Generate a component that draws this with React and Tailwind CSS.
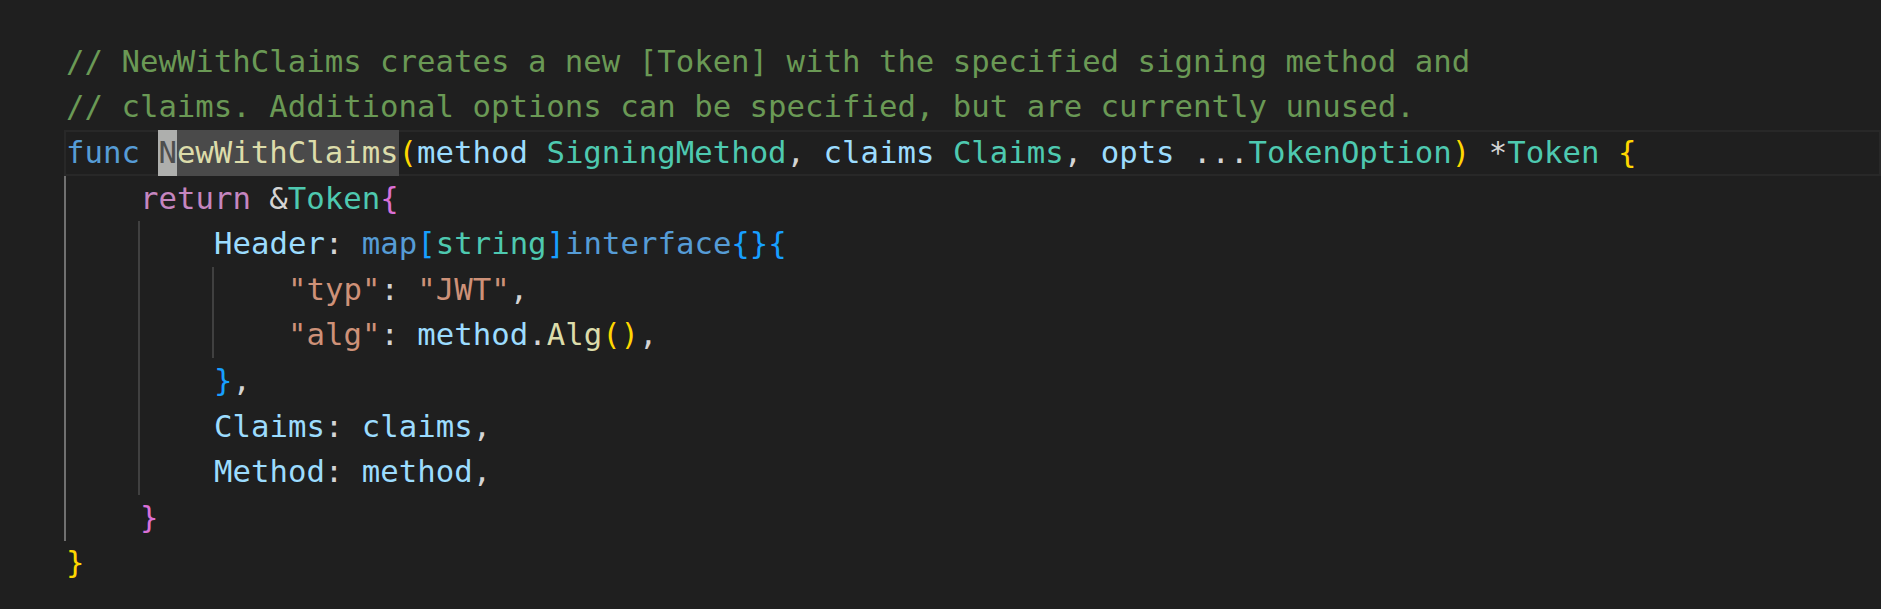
const C = {
  cm: 'text-[#6a9955]',
  kw: 'text-[#569cd6]',
  fn: 'text-[#dcdcaa]',
  pr: 'text-[#9cdcfe]',
  ty: 'text-[#4ec9b0]',
  op: 'text-[#d4d4d4]',
  st: 'text-[#ce9178]',
  ctl: 'text-[#c586c0]',
  b1: 'text-[#ffd700]',
  b2: 'text-[#da70d6]',
  b3: 'text-[#179fff]',
};

// each line: indent level + tokens [class, text]
const LINES = [
  { indent: 0, toks: [[C.cm, '// NewWithClaims creates a new [Token] with the specified signing method and']] },
  { indent: 0, toks: [[C.cm, '// claims. Additional options can be specified, but are currently unused.']] },
  { indent: 0, current: true },
  { indent: 1, toks: [[C.ctl, 'return'], [C.op, ' &'], [C.ty, 'Token'], [C.b2, '{']] },
  { indent: 2, toks: [[C.pr, 'Header'], [C.op, ': '], [C.kw, 'map'], [C.b3, '['], [C.ty, 'string'], [C.b3, ']'], [C.kw, 'interface'], [C.b3, '{}{']] },
  { indent: 3, toks: [[C.st, '"typ"'], [C.op, ': '], [C.st, '"JWT"'], [C.op, ',']] },
  { indent: 3, toks: [[C.st, '"alg"'], [C.op, ': '], [C.pr, 'method'], [C.op, '.'], [C.fn, 'Alg'], [C.b1, '()'], [C.op, ',']] },
  { indent: 2, toks: [[C.b3, '}'], [C.op, ',']] },
  { indent: 2, toks: [[C.pr, 'Claims'], [C.op, ': '], [C.pr, 'claims'], [C.op, ',']] },
  { indent: 2, toks: [[C.pr, 'Method'], [C.op, ': '], [C.pr, 'method'], [C.op, ',']] },
  { indent: 1, toks: [[C.b2, '}']] },
  { indent: 0, toks: [[C.b1, '}']] },
];

function Guides({ n }) {
  return Array.from({ length: n }).map((_, i) => (
    <span
      key={i}
      className={`inline-block h-full w-[74px] shrink-0 border-l-2 ${i === 0 ? 'border-[#707070]' : 'border-[#404040]'}`}
    />
  ));
}

function FuncLine() {
  return (
    <div className="flex h-[45.6px] items-center border-2 border-[#282828] whitespace-pre">
      <span className={C.kw}>func </span>
      <span className="flex h-[45.6px] shrink-0 items-center bg-[#4a4a4a]">
        <span className="flex h-full items-center bg-[#aeafad] text-[#4e4e4e]">N</span>
        <span className={C.fn}>ewWithClaims</span>
      </span>
      <span className={C.b1}>(</span>
      <span className={C.pr}>method</span>
      <span className={C.ty}> SigningMethod</span>
      <span className={C.op}>, </span>
      <span className={C.pr}>claims</span>
      <span className={C.ty}> Claims</span>
      <span className={C.op}>, </span>
      <span className={C.pr}>opts</span>
      <span className={C.op}> ...</span>
      <span className={C.ty}>TokenOption</span>
      <span className={C.b1}>)</span>
      <span className={C.op}> *</span>
      <span className={C.ty}>Token</span>
      <span className={C.b1}> {'{'}</span>
    </div>
  );
}

export default function App() {
  return (
    <div
      className="h-[609px] w-full overflow-hidden bg-[#1f1f1f] pt-[39px] pl-[64px] text-[30.7px]"
      style={{ fontFamily: '"DejaVu Sans Mono", "Liberation Mono", monospace' }}
    >
      {LINES.map((line, i) =>
        line.current ? (
          <FuncLine key={i} />
        ) : (
          <div key={i} className="flex h-[45.6px] items-center whitespace-pre">
            <Guides n={line.indent} />
            <span className="pl-[2px]">
              {line.toks.map(([cls, t], j) => (
                <span key={j} className={cls}>{t}</span>
              ))}
            </span>
          </div>
        )
      )}
    </div>
  );
}
